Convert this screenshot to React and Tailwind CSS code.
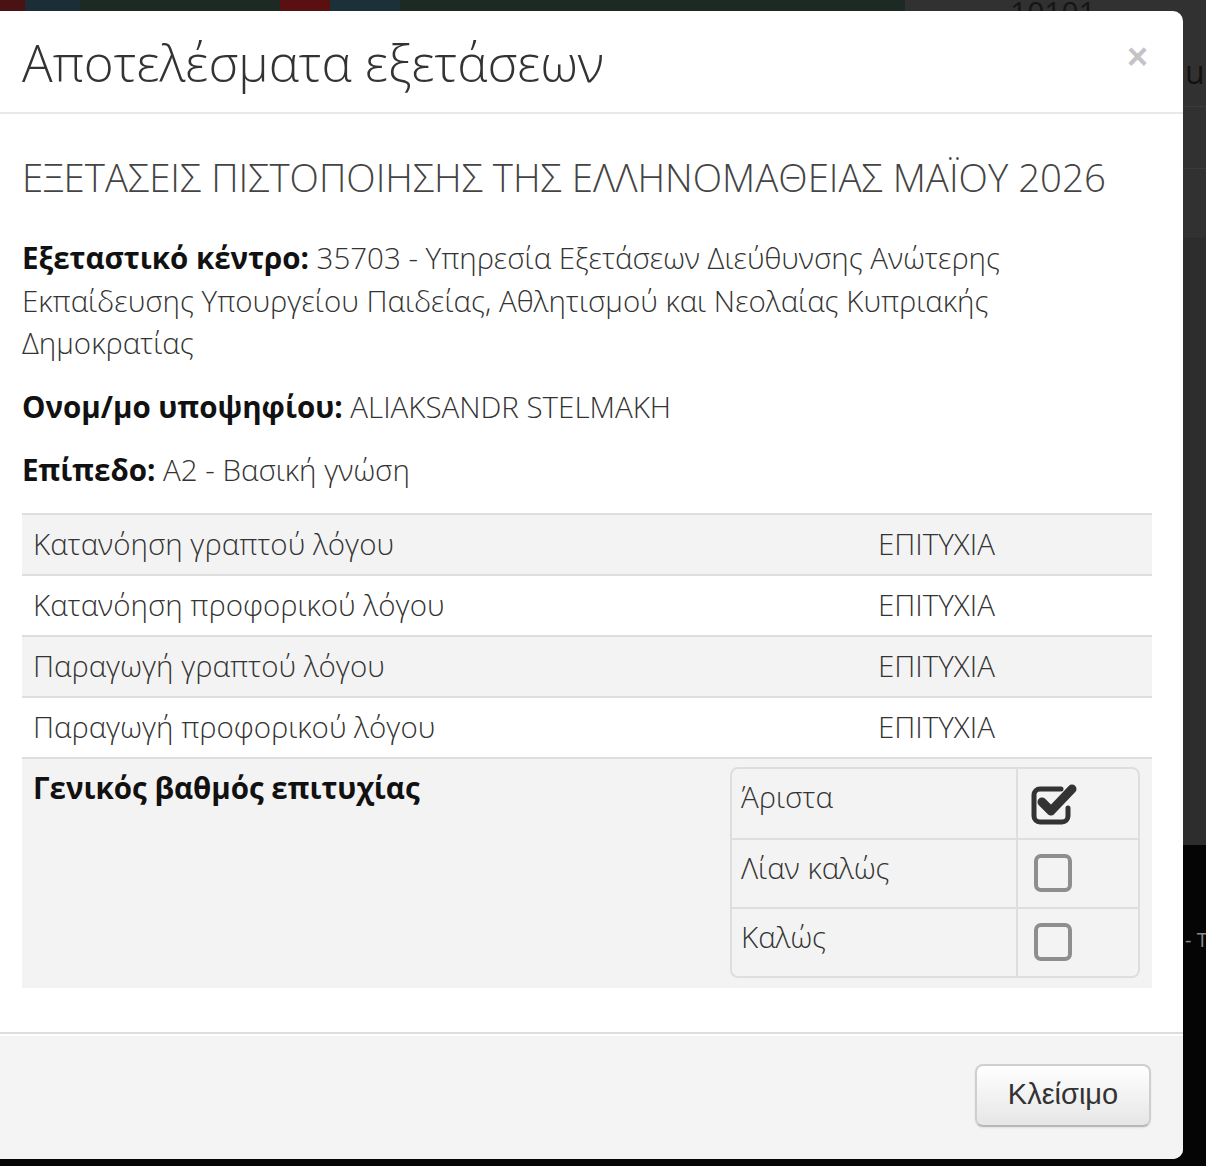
import { useState } from 'react';

const results = [
	{ skill: 'Κατανόηση γραπτού λόγου', result: 'ΕΠΙΤΥΧΙΑ', striped: true },
	{ skill: 'Κατανόηση προφορικού λόγου', result: 'ΕΠΙΤΥΧΙΑ', striped: false },
	{ skill: 'Παραγωγή γραπτού λόγου', result: 'ΕΠΙΤΥΧΙΑ', striped: true },
	{ skill: 'Παραγωγή προφορικού λόγου', result: 'ΕΠΙΤΥΧΙΑ', striped: false }
];

const grades = [
	{ label: 'Άριστα', checked: true },
	{ label: 'Λίαν καλώς', checked: false },
	{ label: 'Καλώς', checked: false }
];

function CheckedBox() {
	return (
		<svg width="48" height="46" viewBox="0 0 48 46" className="block">
			<path
				d="M37 28 V36 a6 6 0 0 1 -6 6 H9 a6 6 0 0 1 -6 -6 V15 a6 6 0 0 1 6 -6 H30"
				fill="none"
				stroke="#333"
				strokeWidth="5"
				strokeLinecap="round"
			/>
			<path
				d="M11 22 L20 31 L41 9"
				fill="none"
				stroke="#333"
				strokeWidth="9"
				strokeLinecap="round"
				strokeLinejoin="round"
			/>
		</svg>
	);
}

function EmptyBox() {
	return <div className="w-[38px] h-[38px] rounded-[7px] border-[4px] border-[#8e8e8e]"></div>;
}

// dimmed page behind the dialog
function Backdrop() {
	return (
		<div className="flex flex-row w-full h-full">
			<div className="w-[1183px] flex flex-col">
				<div className="flex flex-row h-[40px]">
					<div className="w-[25px] bg-[#4a1212]"></div>
					<div className="w-[55px] bg-[#1b2e38]"></div>
					<div className="w-[200px] bg-[#1d2a24]"></div>
					<div className="w-[50px] bg-[#5a1010] rounded-b-full"></div>
					<div className="w-[70px] bg-[#1b3038]"></div>
					<div className="w-[505px] bg-[#1c2a23]"></div>
					<div className="flex-1 bg-[#313131] pl-[105px] text-[30px] leading-[24px] text-[#151515] font-['Open_Sans',sans-serif]">
						10101
					</div>
				</div>
				<div className="h-[805px] bg-[#313131]"></div>
				<div className="flex-1 bg-[#050505]"></div>
			</div>
			<div className="flex-1 flex flex-col overflow-hidden">
				<div className="h-[845px] bg-[#313131] flex flex-col">
					<div className="h-[107px] border-b border-[#3b3b3b] pt-[56px] pl-[2px] text-[32px] leading-[32px] text-[#111] font-['Open_Sans',sans-serif] whitespace-nowrap">
						ur
					</div>
					<div className="h-[62px] border-b border-[#3b3b3b]"></div>
					<div className="h-[70px] border-b border-[#2a2a2a]"></div>
					<div className="flex-1 bg-[#2d2d2d]"></div>
				</div>
				<div className="flex-1 bg-[#050505] pt-[80px] pl-[2px] text-[20px] text-[#8a8a8a] font-['Open_Sans',sans-serif] whitespace-nowrap">
					- T
				</div>
			</div>
		</div>
	);
}

export default function App() {
	const [open, setOpen] = useState(true);

	return (
		<div className="relative w-[1206px] h-[1166px] overflow-hidden bg-[#050505] font-['Open_Sans',sans-serif]">
			<Backdrop />

			{open && (
				<div className="absolute left-[-10px] top-[11px] w-[1193px] bg-white rounded-[10px] overflow-hidden text-[#333]">
					{/* header */}
					<div className="flex flex-row items-start justify-between h-[103px] pl-[32px] pr-[35px] pt-[19px] border-b-2 border-[#e8e8e8]">
						<h3 className="text-[51px] leading-[64px] font-light text-[#333]">Αποτελέσματα εξετάσεων</h3>
						<button
							onClick={() => setOpen(false)}
							className="mt-[9px] text-[36px] leading-[36px] font-bold text-[#c4c4c4] font-['Liberation_Sans',sans-serif]"
						>
							×
						</button>
					</div>

					{/* body */}
					<div className="pl-[32px] pr-[31px] pt-[42px] pb-[44px] text-[29.5px] leading-[42.5px] font-light">
						<h4 className="text-[38.4px] leading-[42px] font-light text-[#444] whitespace-nowrap">
							ΕΞΕΤΑΣΕΙΣ ΠΙΣΤΟΠΟΙΗΣΗΣ ΤΗΣ ΕΛΛΗΝΟΜΑΘΕΙΑΣ ΜΑΪΟΥ 2026
						</h4>

						<p className="mt-[39px] pr-[150px]">
							<span className="font-bold text-[#111]">Εξεταστικό κέντρο:</span> 35703 - Υπηρεσία Εξετάσεων Διεύθυνσης Ανώτερης Εκπαίδευσης Υπουργείου Παιδείας, Αθλητισμού και Νεολαίας Κυπριακής Δημοκρατίας
						</p>
						<p className="mt-[21px]">
							<span className="font-bold text-[#111]">Ονομ/μο υποψηφίου:</span> ALIAKSANDR STELMAKH
						</p>
						<p className="mt-[21px]">
							<span className="font-bold text-[#111]">Επίπεδο:</span> A2 - Βασική γνώση
						</p>

						<div className="mt-[21px] flex flex-col">
							{results.map((row) => (
								<div
									key={row.skill}
									className={`flex flex-row items-center h-[61px] border-t-2 border-[#dedede] ${row.striped ? 'bg-[#f3f3f3]' : 'bg-white'}`}
								>
									<div className="flex-1 px-[11px]">{row.skill}</div>
									<div className="w-[285px] px-[11px]">{row.result}</div>
								</div>
							))}

							<div className="flex flex-row items-start h-[231px] border-t-2 border-[#dedede] bg-[#f3f3f3] pt-[8px] pr-[12px]">
								<div className="flex-1 px-[11px] font-bold text-[#111]">Γενικός βαθμός επιτυχίας</div>
								<div className="w-[410px] border-2 border-[#dedede] rounded-[8px] flex flex-col">
									{grades.map((grade, i) => (
										<div
											key={grade.label}
											className={`flex flex-row h-[69px] ${i > 0 ? 'border-t-2 border-[#dedede]' : ''}`}
										>
											<div className="w-[286px] pl-[9px] pt-[7px] border-r-2 border-[#dedede]">{grade.label}</div>
											<div className="flex-1 flex items-center pl-[13px]">
												{grade.checked ? <CheckedBox /> : <div className="pl-[3px]"><EmptyBox /></div>}
											</div>
										</div>
									))}
								</div>
							</div>
						</div>
					</div>

					{/* footer */}
					<div className="flex flex-row justify-end border-t-2 border-[#dddddd] bg-[#f4f4f4] px-[32px] pt-[30px] pb-[32px] shadow-[inset_0_2px_0_#ffffff]">
						<button
							onClick={() => setOpen(false)}
							className="w-[176px] h-[63px] rounded-[8px] border-2 border-[#cfcfcf] border-b-[#b8b8b8] bg-gradient-to-b from-white to-[#e6e6e6] text-[29px] text-[#333] font-['Liberation_Sans',sans-serif] shadow-[inset_0_2px_0_rgba(255,255,255,0.4),0_1px_2px_rgba(0,0,0,0.08)]"
						>
							Κλείσιμο
						</button>
					</div>
				</div>
			)}
		</div>
	);
}
